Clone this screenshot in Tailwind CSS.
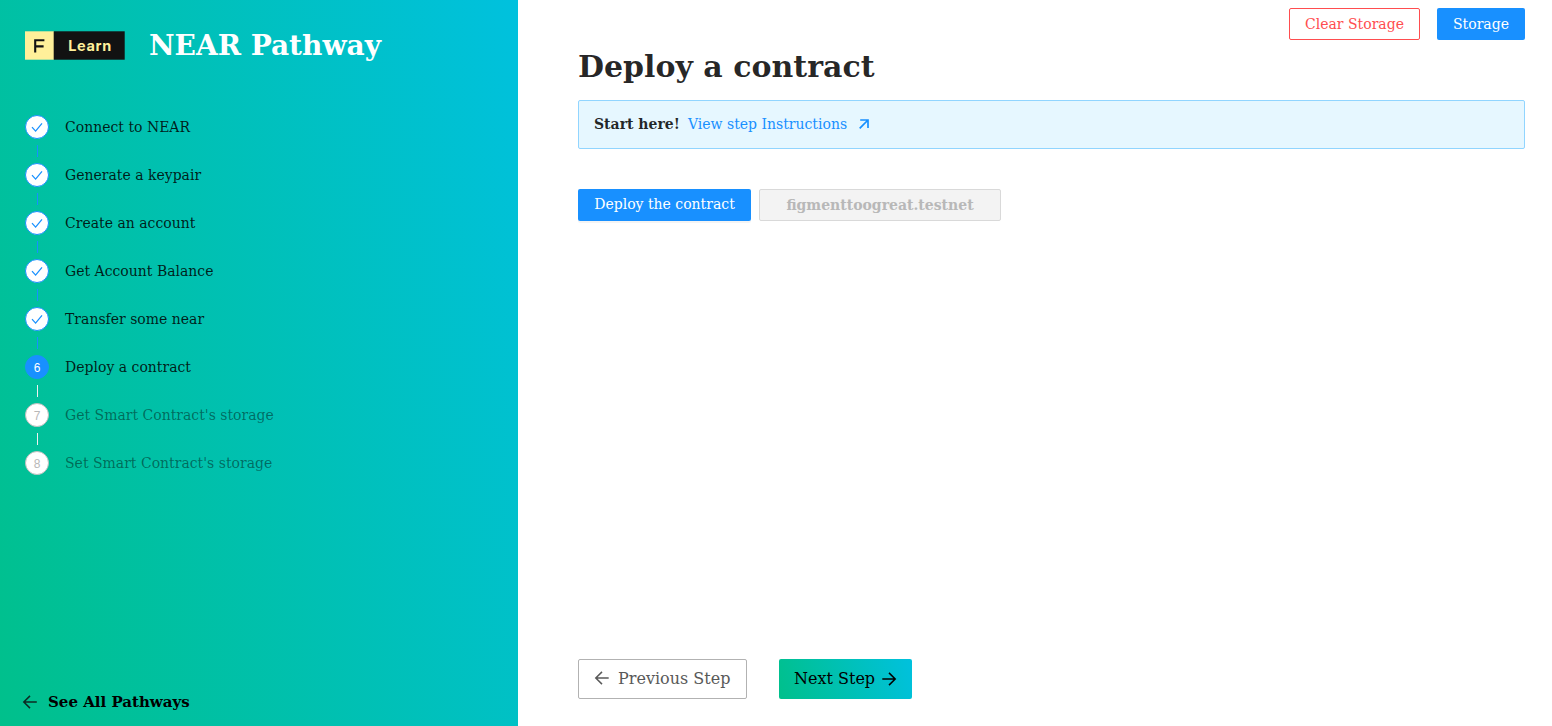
<!DOCTYPE html>
<html lang="en">
<head>
<meta charset="utf-8">
<title>NEAR Pathway</title>
<script src="https://cdn.jsdelivr.net/npm/@tailwindcss/browser@4"></script>
</head>
<body class="bg-white">
<div class="flex h-[726px] w-[1552px] overflow-hidden font-['DejaVu_Serif',serif] text-[14px] leading-[22px] text-black/85">
  <aside class="flex w-[518px] shrink-0 flex-col bg-[linear-gradient(73deg,#00c08b,#00c1de)]">
    <header class="flex h-[90px] items-center pl-[25px]">
      <svg class="h-[29px] w-[100px] shrink-0" viewBox="0 0 100 29">
        <rect y=".3" width="29" height="28.4" fill="#fff09a"/><rect x="28.7" y=".3" width="71" height="28.4" fill="#121212"/>
        <path d="M10.2 21.6V9.3h9.2M10.2 15.4h8.4" fill="none" stroke="#121212" stroke-width="2.1"/>
        <text x="43.2" y="19.7" font-family="Inter, sans-serif" font-size="14.5" font-weight="700" fill="#fff09a" textLength="43" lengthAdjust="spacing">Learn</text>
      </svg>
      <h1 class="ml-6 pt-[2px] text-[28px] font-bold leading-[40px] text-white">NEAR Pathway</h1>
    </header>
    <ol id="steps" class="mt-[25px] flex flex-col pl-[25px]"></ol>
    <a class="mb-[13px] mt-auto flex items-center pl-[22px] text-[15px] font-bold text-black">
      <svg class="mr-[10px] size-4" viewBox="0 0 16 16" fill="none" stroke="#0c2a22" stroke-width="1.5"><path d="M1.8 8h13M8 1.9L1.8 8 8 14.1"/></svg>
      See All Pathways
    </a>
  </aside>
  <main class="flex flex-1 flex-col pl-[60px] pr-[27px] pt-2">
    <div class="flex justify-end gap-[17px]">
      <button class="h-8 w-[131px] rounded-[2px] border border-[#ff4d4f] text-[#ff4d4f]">Clear Storage</button>
      <button class="h-8 w-[88px] rounded-[2px] bg-[#1890ff] text-white">Storage</button>
    </div>
    <h2 class="mt-[7px] text-[30px] font-bold leading-[40px]">Deploy a contract</h2>
    <div class="mt-[13px] flex h-[49px] items-center rounded-[2px] border border-[#91d5ff] bg-[#e6f7ff] pb-[2px] pl-[15px]">
      <strong>Start here!</strong>
      <a class="ml-2 text-[#1890ff]">View step Instructions</a>
      <svg class="ml-3 size-[10px]" viewBox="0 0 10 10" fill="none" stroke="#1890ff" stroke-width="1.7"><path d="M1.2 1h7.8v8M9 1L.7 9.3"/></svg>
    </div>
    <div class="mt-10 flex gap-2">
      <button class="h-8 w-[173px] rounded-[2px] bg-[#1890ff] pb-[2px] text-white shadow-[0_2px_0_rgba(0,0,0,0.045)]">Deploy the contract</button>
      <button class="h-8 w-[242px] rounded-[2px] border border-[#d9d9d9] bg-[#f3f3f3] font-bold text-[#b8b8b8]">figmenttoogreat.testnet</button>
    </div>
    <div class="mb-[27px] mt-auto flex gap-8 text-[16px]">
      <button class="flex h-10 w-[169px] items-center rounded-[2px] border border-[#b2b2b2] pl-[15px] text-[#595959]">
        <svg class="mb-[2px] mr-2 size-4" viewBox="0 0 16 16" fill="none" stroke="#595959" stroke-width="1.5"><path d="M1.8 8h12.9M8 1.9L1.8 8 8 14.1"/></svg>Previous Step
      </button>
      <button class="flex h-10 w-[133px] items-center rounded-[2px] bg-[linear-gradient(73deg,#00c08b,#00c1de)] pl-[15px] text-black">Next Step
        <svg class="ml-[6px] size-4" viewBox="0 0 16 16" fill="none" stroke="#000" stroke-width="1.5"><path d="M1.3 8h12.9M8 1.9L14.2 8 8 14.1"/></svg>
      </button>
    </div>
  </main>
</div>
<script>
const names = ["Connect to NEAR","Generate a keypair","Create an account","Get Account Balance","Transfer some near","Deploy a contract","Get Smart Contract's storage","Set Smart Contract's storage"];
const check = '<svg class="size-3" viewBox="0 0 12 12" fill="none" stroke="#1890ff" stroke-width="1.25"><path d="M1 6.2l3.6 3.9L11 2.3"/></svg>';
document.getElementById('steps').innerHTML = names.map((n, i) => {
  const icon = i < 5 ? 'border-[#1890ff] bg-white' : i === 5 ? 'border-[#1890ff] bg-[#1890ff] pt-[2px] text-white' : 'border-[#bfbfbf] bg-white pt-[2px] text-[#b8b8b8]';
  const line = i < 5 ? 'bg-[#1890ff]' : 'bg-[#f0f0f0]';
  return `<li class="flex h-12 gap-4 ${i > 5 ? 'text-black/45' : ''}"><div class="flex w-6 flex-col items-center"><span class="flex size-6 shrink-0 items-center justify-center rounded-full border font-['Liberation_Sans',sans-serif] text-[12px] ${icon}">${i < 5 ? check : i + 1}</span>${i < 7 ? `<span class="ml-px mt-[6px] h-3 w-px ${line}"></span>` : ''}</div><span class="leading-6">${n}</span></li>`;
}).join('');
</script>
</body>
</html>
